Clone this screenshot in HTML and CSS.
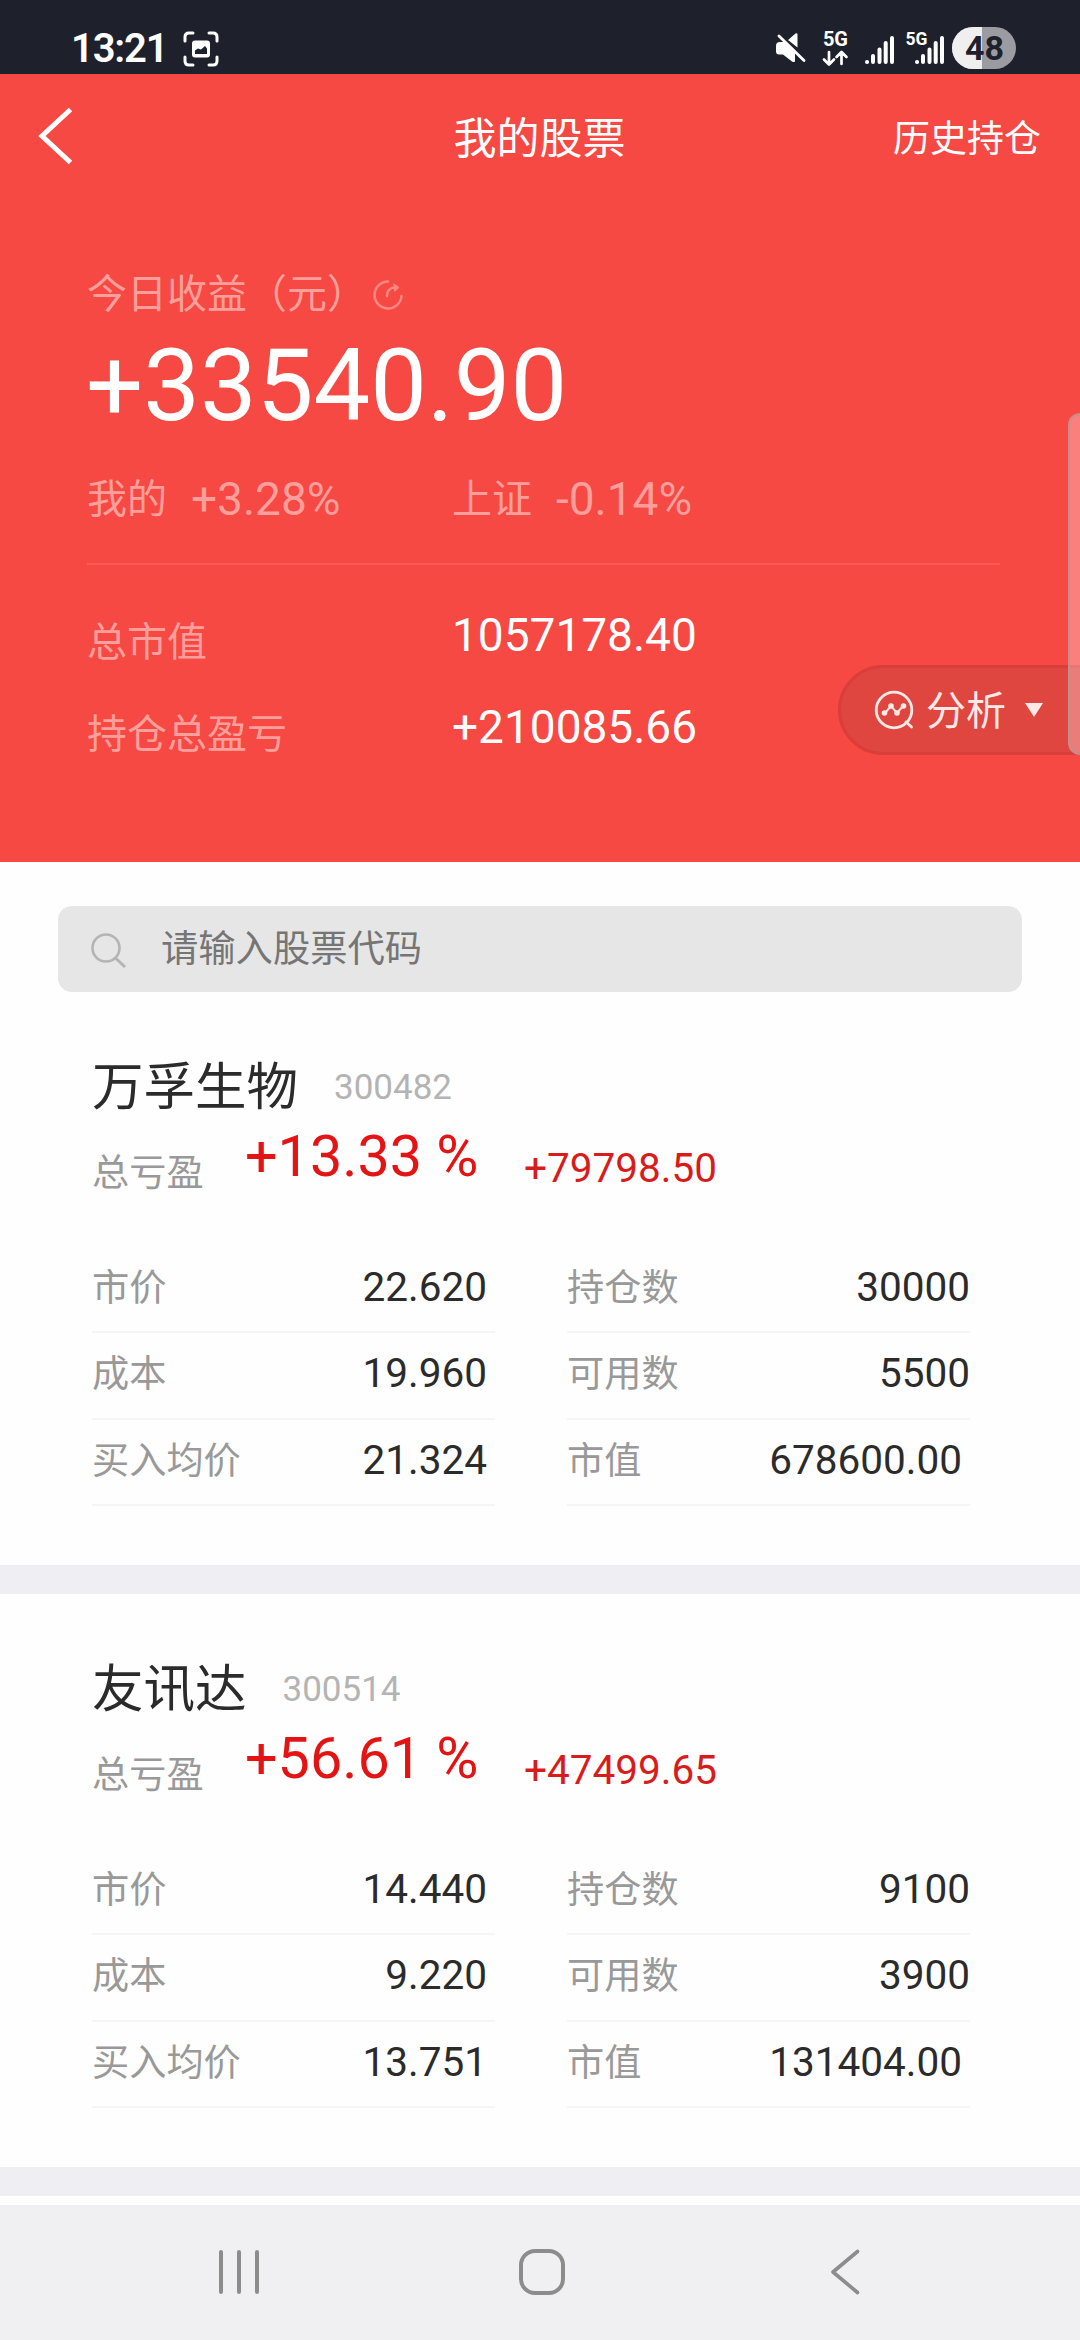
FILE: index.html
```html
<!DOCTYPE html>
<html lang="zh-CN">

<head>
  <meta charset="utf-8">
  <meta name="viewport" content="width=device-width, initial-scale=1.0">
  <title>我的股票</title>
  <link rel="stylesheet" href="styles.css">
</head>

<body>
  <div class="status-bar">
    <span class="status-time">13:21</span>
    <svg class="status-scan" width="36" height="36" viewBox="0 0 36 36">
      <path d="M2 10V6q0-4 4-4h4M26 2h4q4 0 4 4v4M34 26v4q0 4-4 4h-4M10 34H6q-4 0-4-4v-4" fill="none" stroke="#fff" stroke-width="3" stroke-linecap="round" />
      <rect x="9" y="9.500" width="18" height="17" rx="3" fill="#fff" />
      <path d="M12 23v-3.500l3-2 3 1 4-3.500 2 2.500v5.500z" fill="#1e212b" />
    </svg>
    <svg class="status-icons" width="242" height="44" viewBox="775 26 242 44">
      <path d="M776 46q0-4 4-4h4l11 11v8.500q-1.500 1-3 0l-9-7h-4q-3 0-3-3zM788 40l7.500-6.500q2-1 2 1v13z" fill="#fff" />
      <path d="M779 36l25 24.500" stroke="#fff" stroke-width="2.800" stroke-linecap="round" />
      <text class="net" x="823" y="46" font-size="20" textLength="25">5G</text>
      <path d="M829 52v12M824 59.500l5 5 5-5M841.500 64V53M836.500 57l5-5 5 5" fill="none" stroke="#fff" stroke-width="2.700" stroke-linecap="round" stroke-linejoin="round" />
      <g stroke="#fff" stroke-width="4" stroke-linecap="round">
        <path d="M867 62h.1M873 56v6M879.500 49.500v12.500M885.700 43v19M892 38v24" />
        <path d="M917 62h.1M923 56v6M929.500 49.500v12.500M935.700 43v19M942 38v24" />
      </g>
      <text class="net" x="905.500" y="44.500" font-size="17.500" textLength="22">5G</text>
      <rect x="952" y="27" width="64" height="42" rx="21" fill="#9b9ca1" />
      <path d="M982 27h-9a21 21 0 0 0 0 42h9z" fill="#efeff0" />
      <text class="battery" x="984.500" y="60" font-size="34" text-anchor="middle">48</text>
    </svg>
  </div>

  <header class="summary">
    <div class="app-bar">
      <svg width="36" height="60" viewBox="0 0 36 60">
        <path d="M32.500 3.500L4 30l28.500 26.500" fill="none" stroke="#fff" stroke-width="5" />
      </svg>
      <h1>我的股票</h1>
      <a class="history">历史持仓</a>
    </div>

    <div class="today">
      <span>今日收益（元）</span>
      <svg width="32" height="32" viewBox="0 0 32 32" fill="none" stroke="#fb8782" stroke-width="2.500" stroke-linecap="round">
        <path d="M16 2.500A13.500 13.500 0 1 0 29.500 17" />
        <path d="M15 17q0-8 8-8.500" />
        <path d="M22 5l5 3.500-4 3.500z" fill="#fb8782" stroke-width="1" />
      </svg>
    </div>
    <div class="today-value">+33540.90</div>
    <div class="compare">
      <div><span>我的</span><b>+3.28%</b></div>
      <div><span>上证</span><b>-0.14%</b></div>
    </div>
    <div class="total">
      <span>总市值</span><b>1057178.40</b>
      <span>持仓总盈亏</span><b>+210085.66</b>
    </div>

    <div class="analysis">
      <svg width="40" height="40" viewBox="0 0 40 40" fill="none" stroke="#ffe9e7" stroke-width="2.800" stroke-linecap="round">
        <circle cx="20" cy="20" r="17.800" />
        <path d="M32 32l5.500 5" />
        <path d="M11 23l6-7 6 7 6-7" stroke-width="2" />
        <g fill="#ffe9e7" stroke="none">
          <circle cx="10.500" cy="23" r="2.800" />
          <circle cx="17" cy="16" r="2.800" />
          <circle cx="23" cy="23" r="2.800" />
          <circle cx="29.500" cy="16" r="2.800" />
        </g>
      </svg>
      <span>分析</span>
      <i class="caret"></i>
    </div>
    <div class="edge-handle"></div>
  </header>

  <div class="search">
    <svg width="36" height="36" viewBox="0 0 36 36" fill="none" stroke="#b4b4b4" stroke-width="2.600">
      <circle cx="15" cy="15" r="13.500" />
      <path d="M24.500 25l9.500 9" stroke-width="3" />
    </svg>
    <span>请输入股票代码</span>
  </div>

  <main>
    <section class="stock">
      <div class="stock-title"><h2>万孚生物</h2><span>300482</span></div>
      <div class="profit">
        <span class="profit-label">总亏盈</span>
        <span class="profit-rate">+13.33 %</span>
        <span class="profit-amount">+79798.50</span>
      </div>
      <div class="detail">
        <div class="row"><span>市价</span><b>22.620</b></div>
        <div class="row count"><span>持仓数</span><b>30000</b></div>
        <div class="row"><span>成本</span><b>19.960</b></div>
        <div class="row count"><span>可用数</span><b>5500</b></div>
        <div class="row"><span>买入均价</span><b>21.324</b></div>
        <div class="row"><span>市值</span><b>678600.00</b></div>
      </div>
    </section>

    <section class="stock">
      <div class="stock-title"><h2>友讯达</h2><span>300514</span></div>
      <div class="profit">
        <span class="profit-label">总亏盈</span>
        <span class="profit-rate">+56.61 %</span>
        <span class="profit-amount">+47499.65</span>
      </div>
      <div class="detail">
        <div class="row"><span>市价</span><b>14.440</b></div>
        <div class="row count"><span>持仓数</span><b>9100</b></div>
        <div class="row"><span>成本</span><b>9.220</b></div>
        <div class="row count"><span>可用数</span><b>3900</b></div>
        <div class="row"><span>买入均价</span><b>13.751</b></div>
        <div class="row"><span>市值</span><b>131404.00</b></div>
      </div>
    </section>
  </main>

  <nav class="nav-bar">
    <svg width="46" height="46" viewBox="0 0 46 46">
      <path d="M5 3v40M23 3v40M41 3v40" stroke="#8c8c8c" stroke-width="4" stroke-linecap="round" />
    </svg>
    <svg width="46" height="46" viewBox="0 0 46 46">
      <rect x="2" y="2" width="42" height="42" rx="14" fill="none" stroke="#8c8c8c" stroke-width="4" />
    </svg>
    <svg width="46" height="46" viewBox="0 0 46 46">
      <path d="M35.500 2.500L11 23l24.500 20.500" fill="none" stroke="#8c8c8c" stroke-width="3.600" stroke-linecap="round" stroke-linejoin="round" />
    </svg>
  </nav>
</body>

</html>
```
FILE: styles.css
```css
:root {
  --red: #f64944;
  --pink: #ff9f9b;
  --up: #e51414;
  --gray: #999;
  --dark: #2b2b2b;
}

* {
  box-sizing: border-box;
}

html,
body {
  margin: 0;
  height: 100%;
}

body {
  display: flex;
  flex-direction: column;
  width: 1080px;
  height: 2340px;
  overflow: hidden;
  background: #fefefe;
  font-family: Roboto, "Noto Sans CJK SC", sans-serif;
  white-space: nowrap;
}

svg {
  display: block;
  flex: none;
}

h1,
h2,
b {
  margin: 0;
  font-weight: 400;
}

/* status bar */
.status-bar {
  display: flex;
  flex: none;
  height: 74px;
  padding: 26px 63px 0 71px;
  background: #1e212b;
  color: #fff;
}

.status-time {
  width: 112px;
  font-size: 40px;
  font-weight: 600;
  line-height: 45px;
  letter-spacing: -1.2px;
}

.status-scan {
  margin-top: 5px;
}

.status-icons {
  margin-left: auto;
}

.net {
  fill: #fff;
  font-weight: 700;
}

.battery {
  fill: #1e212b;
  font-weight: 700;
}

/* red summary block */
.summary {
  position: relative;
  flex: none;
  height: 788px;
  padding-left: 87px;
  background: var(--red);
  color: #fff;
}

.app-bar {
  display: grid;
  grid-template-columns: 1fr auto 1fr;
  align-items: center;
  height: 128px;
  margin-left: -87px;
  padding: 0 39px 4px 38px;
}

.app-bar h1 {
  padding-bottom: 3px;
  font-size: 43px;
}

.history {
  justify-self: end;
  padding-bottom: 1px;
  font-size: 37px;
}

.today {
  display: flex;
  align-items: center;
  height: 60px;
  margin-top: 63px;
  color: var(--pink);
  font-size: 40px;
  line-height: 60px;
}

.today svg {
  margin-left: 5px;
}

.today-value {
  margin: 1px 0 0 -1px;
  font-size: 101px;
  line-height: 120px;
}

.compare {
  display: grid;
  grid-template-columns: 365px auto;
  height: 60px;
  margin-top: 24px;
  color: var(--pink);
  line-height: 60px;
}

.compare div {
  display: flex;
  gap: 24px;
}

.compare span {
  font-size: 40px;
}

.compare b {
  margin-top: -1px;
  font-size: 46px;
}

.total {
  display: grid;
  grid-template-columns: 365px auto;
  row-gap: 32px;
  width: 913px;
  margin-top: 33px;
  padding-top: 42px;
  border-top: 2px solid #fb5a55;
  line-height: 60px;
}

.total span {
  height: 60px;
  padding-top: 6px;
  color: var(--pink);
  font-size: 40px;
}

.total b {
  height: 60px;
  margin-top: -2px;
  font-size: 46px;
}

.analysis {
  position: absolute;
  top: 591px;
  right: -3px;
  display: flex;
  align-items: center;
  width: 245px;
  height: 90px;
  padding-left: 33px;
  border: 3px solid #d93e3a;
  border-radius: 45px 0 0 45px;
  background: #de463f;
  color: #ffe9e7;
  font-size: 40px;
}

.analysis span {
  margin: 0 19px 5px 12px;
}

.caret {
  border: 9px solid transparent;
  border-top: 14px solid #ffe9e7;
  border-bottom: 0;
}

.edge-handle {
  position: absolute;
  top: 339px;
  right: 0;
  width: 12px;
  height: 342px;
  border: 2px solid rgba(190, 145, 145, .8);
  border-right: 0;
  border-radius: 12px 0 0 12px;
  background: rgba(255, 255, 255, .3);
}

/* search */
.search {
  display: flex;
  flex: none;
  align-items: center;
  height: 86px;
  margin: 44px 58px 0;
  padding-left: 33px;
  border-radius: 14px;
  background: #e6e6e6;
  color: #757575;
  font-size: 37.3px;
}

.search svg {
  margin: 4px 34px 0 0;
}

.search span {
  margin-bottom: 6px;
}

/* stock list */
.stock {
  height: 602px;
  padding: 66px 109px 0 92px;
  border-bottom: 29px solid #efeef3;
}

.stock-title {
  display: flex;
  gap: 36px;
  line-height: 60px;
}

.stock-title h2 {
  color: var(--dark);
  font-size: 51.5px;
}

.stock-title span {
  color: #b4b4b4;
  font-size: 35px;
}

.profit {
  display: flex;
  height: 60px;
  margin-top: 9px;
  line-height: 60px;
}

.profit-label {
  width: 153px;
  margin-top: 16px;
  color: var(--gray);
  font-size: 37.2px;
}

.profit-rate {
  width: 279px;
  color: var(--up);
  font-size: 57.5px;
}

.profit-amount {
  margin-top: 11px;
  color: #d81c1c;
  font-size: 40.5px;
}

.detail {
  display: grid;
  grid-template-columns: 403px 403px;
  column-gap: 72px;
  margin-top: 59.5px;
}

.row {
  display: flex;
  justify-content: space-between;
  height: 86.5px;
  padding-right: 8px;
  border-bottom: 2px solid #f5f5f5;
  line-height: 82px;
}

.row.count {
  padding-right: 0;
}

.row span {
  color: var(--gray);
  font-size: 37.2px;
}

.row b {
  margin-top: -1px;
  color: var(--dark);
  font-size: 40.5px;
}

/* system navigation */
.nav-bar {
  display: flex;
  flex: none;
  align-items: center;
  justify-content: space-between;
  height: 135px;
  margin-top: 9px;
  padding: 0 212px 2px 216px;
  background: #f0f0f2;
}
```
